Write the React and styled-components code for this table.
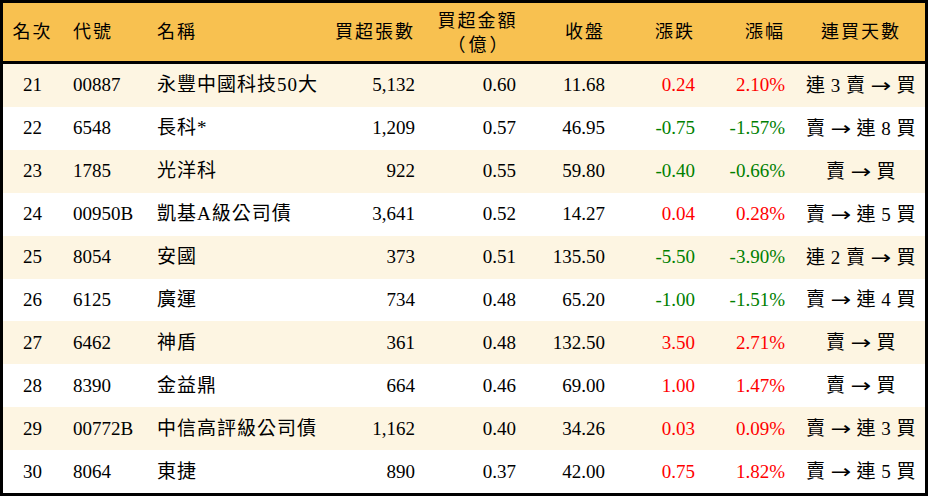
import React from "react";
import styled, { createGlobalStyle } from "styled-components";

const GlobalStyle = createGlobalStyle`
  html, body {
    margin: 0;
    padding: 0;
    background: #ffffff;
  }
  body {
    font-family: "Liberation Serif", "Noto Sans CJK TC", serif;
    color: #000;
  }
`;

const COLS = "59px 84px 184px 97px 101px 89px 90px 90px 128px";

const Table = styled.div`
  width: 928px;
  height: 496px;
  box-sizing: border-box;
  border: 3px solid #000;
  display: flex;
  flex-direction: column;
  font-size: 19px;
`;

const HeaderRow = styled.div`
  display: grid;
  grid-template-columns: ${COLS};
  height: 58px;
  flex-shrink: 0;
  background: #f8c150;
  border-bottom: 3px solid #000;
  align-items: center;
  font-size: 18px;
`;

const Row = styled.div`
  display: grid;
  grid-template-columns: ${COLS};
  flex: 1;
  align-items: center;
  background: ${(p) => (p.$alt ? "#fdf5e2" : "#ffffff")};
`;

const Cell = styled.div`
  box-sizing: border-box;
  white-space: nowrap;
  text-align: ${(p) => p.$align || "left"};
  padding-left: ${(p) => (p.$align === "left" || !p.$align ? "11px" : "0")};
  padding-right: ${(p) => (p.$align === "right" ? "12px" : "0")};
  line-height: 20px;
`;

const HeadStack = styled.div`
  display: flex;
  flex-direction: column;
  align-items: center;
  line-height: 22px;
`;

const HeadText = styled.span`
  letter-spacing: 2px;
`;

const Paren = styled.span`
  font-family: "Noto Sans CJK TC", sans-serif;
  letter-spacing: 3px;
  padding-left: 3px;
`;

const Name = styled.span`
  letter-spacing: 1px;
`;

const Streak = styled.span`
  letter-spacing: 0.5px;
`;

const Arrow = styled.span`
  font-family: "DejaVu Sans", sans-serif;
  display: inline-block;
  transform: scaleX(1.3);
  margin: 0 2px;
`;

const Change = styled.span`
  color: ${(p) => (p.$up ? "#ff0000" : "#008000")};
`;

const rows = [
  ["21", "00887", "永豐中國科技50大", "5,132", "0.60", "11.68", "0.24", "2.10%", "連 3 賣 → 買"],
  ["22", "6548", "長科*", "1,209", "0.57", "46.95", "-0.75", "-1.57%", "賣 → 連 8 買"],
  ["23", "1785", "光洋科", "922", "0.55", "59.80", "-0.40", "-0.66%", "賣 → 買"],
  ["24", "00950B", "凱基A級公司債", "3,641", "0.52", "14.27", "0.04", "0.28%", "賣 → 連 5 買"],
  ["25", "8054", "安國", "373", "0.51", "135.50", "-5.50", "-3.90%", "連 2 賣 → 買"],
  ["26", "6125", "廣運", "734", "0.48", "65.20", "-1.00", "-1.51%", "賣 → 連 4 買"],
  ["27", "6462", "神盾", "361", "0.48", "132.50", "3.50", "2.71%", "賣 → 買"],
  ["28", "8390", "金益鼎", "664", "0.46", "69.00", "1.00", "1.47%", "賣 → 買"],
  ["29", "00772B", "中信高評級公司債", "1,162", "0.40", "34.26", "0.03", "0.09%", "賣 → 連 3 買"],
  ["30", "8064", "東捷", "890", "0.37", "42.00", "0.75", "1.82%", "賣 → 連 5 買"],
];

function StreakText({ text }) {
  const [before, after] = text.split(" → ");
  return (
    <Streak>
      {before}{" "}
      <Arrow>→</Arrow>
      {" "}{after}
    </Streak>
  );
}

export default function App() {
  return (
    <>
      <GlobalStyle />
      <Table>
        <HeaderRow>
          <Cell $align="center"><HeadText>名次</HeadText></Cell>
          <Cell><HeadText>代號</HeadText></Cell>
          <Cell><HeadText>名稱</HeadText></Cell>
          <Cell $align="right"><HeadText>買超張數</HeadText></Cell>
          <Cell $align="center">
            <HeadStack>
              <HeadText>買超金額</HeadText>
              <Paren>（億）</Paren>
            </HeadStack>
          </Cell>
          <Cell $align="right"><HeadText>收盤</HeadText></Cell>
          <Cell $align="right"><HeadText>漲跌</HeadText></Cell>
          <Cell $align="right"><HeadText>漲幅</HeadText></Cell>
          <Cell $align="center"><HeadText>連買天數</HeadText></Cell>
        </HeaderRow>
        {rows.map((r, i) => {
          const up = !r[6].startsWith("-");
          return (
            <Row key={r[0]} $alt={i % 2 === 0}>
              <Cell $align="center">{r[0]}</Cell>
              <Cell>{r[1]}</Cell>
              <Cell><Name>{r[2]}</Name></Cell>
              <Cell $align="right">{r[3]}</Cell>
              <Cell $align="right">{r[4]}</Cell>
              <Cell $align="right">{r[5]}</Cell>
              <Cell $align="right"><Change $up={up}>{r[6]}</Change></Cell>
              <Cell $align="right"><Change $up={up}>{r[7]}</Change></Cell>
              <Cell $align="center"><StreakText text={r[8]} /></Cell>
            </Row>
          );
        })}
      </Table>
    </>
  );
}
